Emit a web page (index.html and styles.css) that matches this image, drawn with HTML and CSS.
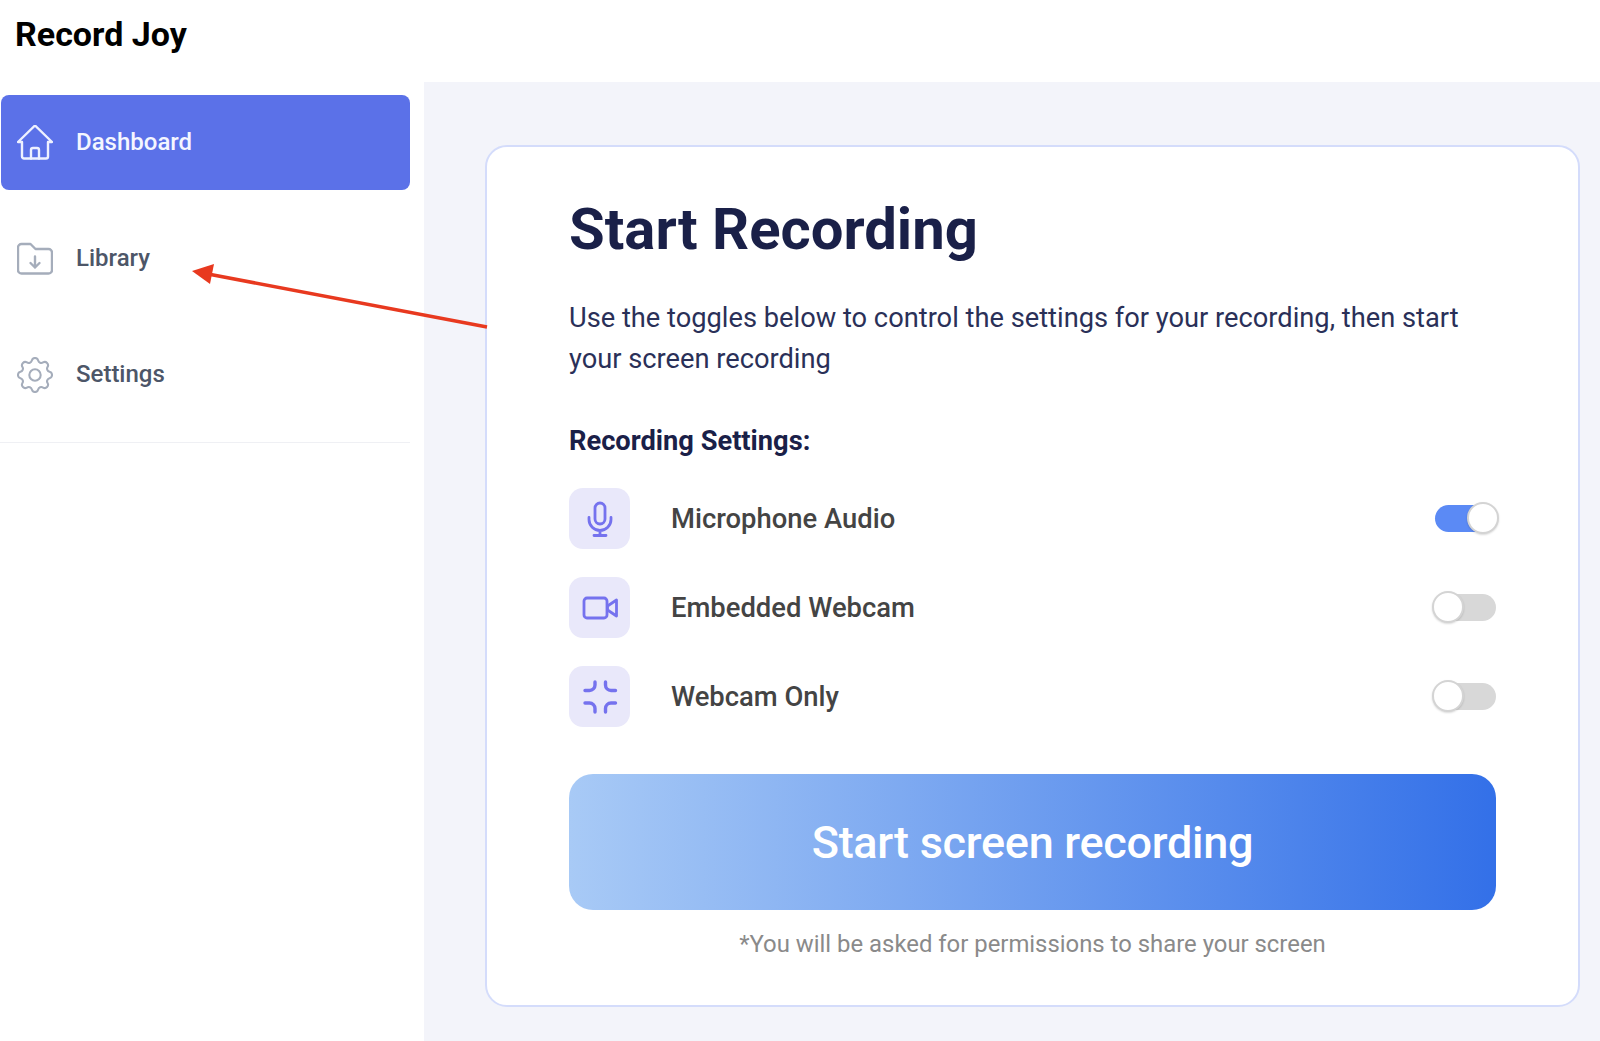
FILE: index.html
```html
<!DOCTYPE html>
<html lang="en">
<head>
    <meta charset="UTF-8">
    <meta name="viewport" content="width=device-width, initial-scale=1.0">
    <title>Record Joy</title>
    <link rel="stylesheet" href="styles.css">
</head>
<body>
    <header class="topbar">
        <h1>Record Joy</h1>
    </header>
    <div class="layout">
        <aside class="sidebar">
            <nav class="nav">
                <a class="nav-item active" href="#">
                    <svg class="nav-icon" viewBox="0 0 36 36" fill="none" stroke="currentColor" stroke-width="2.400" stroke-linecap="round" stroke-linejoin="round">
                        <path d="M1 17 18 .500 35 17h-4v14.500a2 2 0 0 1-2 2H7a2 2 0 0 1-2-2V17z"/>
                        <path d="M14 33.500V25a2 2 0 0 1 2-2h4a2 2 0 0 1 2 2v8.500"/>
                    </svg>
                    <span>Dashboard</span>
                </a>
                <a class="nav-item" href="#">
                    <svg class="nav-icon" viewBox="0 0 36 36" fill="none" stroke="currentColor" stroke-width="2.400" stroke-linecap="round" stroke-linejoin="round">
                        <path d="M1 6.500a3.500 3.500 0 0 1 3.500-3.500h9l5 5h13a3.500 3.500 0 0 1 3.500 3.500V29a3.500 3.500 0 0 1-3.500 3.500h-27A3.500 3.500 0 0 1 1 29z"/>
                        <path d="M18 15.500v11M13.500 22l4.500 4.500 4.500-4.500"/>
                    </svg>
                    <span>Library</span>
                </a>
                <a class="nav-item" href="#">
                    <svg class="nav-icon" viewBox="2.500 2.500 19 19" fill="none" stroke="currentColor" stroke-width="1.100" stroke-linecap="round" stroke-linejoin="round">
                        <path d="M10.325 4.317c.426-1.756 2.924-1.756 3.350 0a1.724 1.724 0 0 0 2.573 1.066c1.543-.94 3.310.826 2.370 2.370a1.724 1.724 0 0 0 1.065 2.572c1.756.426 1.756 2.924 0 3.350a1.724 1.724 0 0 0-1.066 2.573c.94 1.543-.826 3.310-2.370 2.370a1.724 1.724 0 0 0-2.572 1.065c-.426 1.756-2.924 1.756-3.350 0a1.724 1.724 0 0 0-2.573-1.066c-1.543.94-3.310-.826-2.370-2.370a1.724 1.724 0 0 0-1.065-2.572c-1.756-.426-1.756-2.924 0-3.350a1.724 1.724 0 0 0 1.066-2.573c-.94-1.543.826-3.310 2.370-2.370.996.608 2.296.07 2.572-1.065z"/>
                        <circle cx="12" cy="12" r="3"/>
                    </svg>
                    <span>Settings</span>
                </a>
            </nav>
            <div class="nav-divider"></div>
        </aside>
        <main class="main">
            <section class="card">
                <h2>Start Recording</h2>
                <p class="intro">Use the toggles below to control the settings for your recording, then start your screen recording</p>
                <h3>Recording Settings:</h3>
                <div class="settings">
                    <div class="setting">
                        <div class="setting-icon">
                            <svg viewBox="0 0 36 36" fill="none" stroke="currentColor" stroke-width="2.800" stroke-linecap="round" stroke-linejoin="round">
                                <rect x="13" y="2" width="10" height="21" rx="5"/>
                                <path d="M7 16.500v2a11 11 0 0 0 22 0v-2M18 29.500V34M12 34.500h12"/>
                            </svg>
                        </div>
                        <span class="setting-label">Microphone Audio</span>
                        <div class="toggle on"><span class="knob"></span></div>
                    </div>
                    <div class="setting">
                        <div class="setting-icon">
                            <svg viewBox="0 0 36 36" fill="none" stroke="currentColor" stroke-width="2.800" stroke-linecap="round" stroke-linejoin="round">
                                <rect x="2" y="8" width="23" height="20" rx="3"/>
                                <path d="M25.500 16l9-6v16l-9-6z"/>
                            </svg>
                        </div>
                        <span class="setting-label">Embedded Webcam</span>
                        <div class="toggle"><span class="knob"></span></div>
                    </div>
                    <div class="setting">
                        <div class="setting-icon">
                            <svg viewBox="0 0 36 36" fill="none" stroke="currentColor" stroke-width="3.400" stroke-linecap="round" stroke-linejoin="round">
                                <path d="M13 3v3a5.500 5.500 0 0 1-5.500 5.500H3"/>
                                <path d="M23.500 3v3a5.500 5.500 0 0 0 5.500 5.500h4.500"/>
                                <path d="M3 24h4.500a5.500 5.500 0 0 1 5.500 5.500V33"/>
                                <path d="M33.500 24H29a5.500 5.500 0 0 0-5.500 5.500V33"/>
                            </svg>
                        </div>
                        <span class="setting-label">Webcam Only</span>
                        <div class="toggle"><span class="knob"></span></div>
                    </div>
                </div>
                <button class="start-btn" type="button">Start screen recording</button>
                <p class="note">*You will be asked for permissions to share your screen</p>
            </section>
        </main>
    </div>

    <!-- red annotation arrow drawn over the page -->
    <svg class="annotation" viewBox="0 0 1600 1041">
        <path d="M487 327 208 274" stroke="#e8391f" stroke-width="3.600" fill="none"/>
        <path d="M192 271 214 264 210 284z" fill="#e8391f"/>
    </svg>
</body>
</html>
```

FILE: styles.css
```css
body {
    font-family: Roboto, "Liberation Sans", sans-serif;
    background-color: white;
    margin: 0;
    padding: 0;
    height: 1041px;
    overflow: hidden;
    position: relative;
}
.topbar {
    height: 82px;
    padding-left: 15px;
    display: flex;
    align-items: flex-start;
}
.topbar h1 {
    margin: 15px 0 0;
    font-size: 34px;
    line-height: 38px;
    font-weight: 700;
    color: #000;
}
.layout {
    display: flex;
    height: 959px;
}
.sidebar {
    width: 424px;
    box-sizing: border-box;
    padding: 13px 14px 0 1px;
    flex-shrink: 0;
}
.nav {
    display: flex;
    flex-direction: column;
    gap: 21px;
}
.nav-item {
    height: 95px;
    display: flex;
    align-items: center;
    padding-left: 16px;
    border-radius: 8px;
    color: #4d5668;
    font-size: 24px;
    font-weight: 500;
    text-decoration: none;
}
.nav-item span {
    margin-bottom: 2px;
}
.nav-item.active {
    background-color: #5b71e8;
    color: #f4f6ff;
}
.nav-icon {
    width: 36px;
    height: 36px;
    margin-right: 23px;
    color: #a5adbb;
}
.active .nav-icon {
    color: #eef1ff;
}
.nav-divider {
    height: 1px;
    margin-top: 20px;
    margin-left: -1px;
    background-color: #eff0f4;
}
.main {
    flex: 1;
    background-color: #f3f4fa;
    padding: 63px 20px 0 61px;
}
.card {
    height: 862px;
    box-sizing: border-box;
    background: white;
    border: 2px solid #d4dcfb;
    border-radius: 22px;
    padding: 48px 82px 0 82px;
}
.card h2 {
    margin: 0;
    font-size: 58px;
    line-height: 68px;
    font-weight: 700;
    color: #1a2048;
}
.intro {
    margin: 35px 0 0;
    font-size: 27.250px;
    line-height: 41px;
    color: #2a3058;
}
.card h3 {
    margin: 43px 0 0;
    font-size: 27.250px;
    line-height: 36px;
    font-weight: 700;
    color: #1a2048;
}
.settings {
    margin-top: 29px;
    display: flex;
    flex-direction: column;
    gap: 28px;
}
.setting {
    display: flex;
    align-items: center;
}
.setting-icon {
    width: 61px;
    height: 61px;
    border-radius: 14px;
    background-color: #e9e8fa;
    color: #7572ee;
    display: flex;
    align-items: center;
    justify-content: center;
    margin-right: 41px;
}
.setting-icon svg {
    width: 36px;
    height: 36px;
}
.setting-label {
    flex: 1;
    font-size: 27.400px;
    font-weight: 500;
    color: #444;
}
.toggle {
    width: 61px;
    height: 27px;
    border-radius: 14px;
    background-color: #d8d8d8;
    position: relative;
}
.toggle.on {
    background-color: #5b8af5;
}
.knob {
    position: absolute;
    left: -3px;
    top: -3px;
    width: 28px;
    height: 28px;
    border-radius: 50%;
    background: white;
    border: 2px solid #d4d4d4;
    box-shadow: 0 1px 2px rgba(0, 0, 0, 0.15);
}
.toggle.on .knob {
    left: auto;
    right: -3px;
}
.start-btn {
    display: block;
    width: 100%;
    height: 136px;
    margin-top: 47px;
    border: none;
    border-radius: 24px;
    background: linear-gradient(90deg, #a8caf6, #3370e8);
    color: white;
    font-family: inherit;
    font-size: 45px;
    font-weight: 500;
    letter-spacing: -0.280px;
}
.note {
    margin: 19px 0 0;
    text-align: center;
    font-size: 23.880px;
    line-height: 30px;
    color: #8a8a8a;
}
.annotation {
    position: absolute;
    left: 0;
    top: 0;
    width: 1600px;
    height: 1041px;
    pointer-events: none;
}
```
